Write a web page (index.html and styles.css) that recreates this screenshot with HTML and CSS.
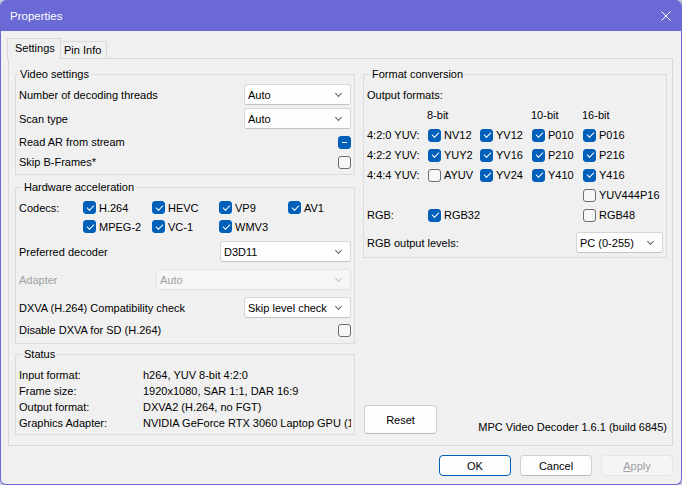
FILE: index.html
```html
<!DOCTYPE html>
<html>
<head>
<meta charset="utf-8">
<title>Properties</title>
<link rel="stylesheet" href="styles.css">
</head>
<body>
<div class="window">
  <div class="titlebar">
    <span class="title">Properties</span>
    <svg class="close" width="10" height="10" viewBox="0 0 10 10"><path d="M0.5 0.5L9.5 9.5M9.5 0.5L0.5 9.5" stroke="#fff" stroke-width="1" fill="none"/></svg>
  </div>
  <div class="content">
    <div class="tabs">
      <div class="tab active">Settings</div>
      <div class="tab">Pin Info</div>
    </div>
    <div class="panel">
      <div class="col left">
        <fieldset class="group gvs">
          <legend>Video settings</legend>
          <div class="row h21"><span>Number of decoding threads</span><div class="combo w107">Auto</div></div>
          <div class="row h21 mt3"><span>Scan type</span><div class="combo w107">Auto</div></div>
          <div class="row h20 mt3"><span>Read AR from stream</span><span class="cb mixed"></span></div>
          <div class="row h20"><span>Skip B-Frames*</span><span class="cb"></span></div>
        </fieldset>
        <fieldset class="group gha">
          <legend>Hardware acceleration</legend>
          <div class="cgrid">
            <span>Codecs:</span>
            <span class="chk"><span class="cb on"></span>H.264</span>
            <span class="chk"><span class="cb on"></span>HEVC</span>
            <span class="chk"><span class="cb on"></span>VP9</span>
            <span class="chk"><span class="cb on"></span>AV1</span>
            <span></span>
            <span class="chk"><span class="cb on"></span>MPEG-2</span>
            <span class="chk"><span class="cb on"></span>VC-1</span>
            <span class="chk"><span class="cb on"></span>WMV3</span>
          </div>
          <div class="row h21 mt5"><span>Preferred decoder</span><div class="combo w131">D3D11</div></div>
          <div class="row h21 mt7 disabled"><span>Adapter</span><div class="combo w195 off">Auto</div></div>
          <div class="row h21 mt7"><span>DXVA (H.264) Compatibility check</span><div class="combo w107">Skip level check</div></div>
          <div class="row h20 mt2"><span>Disable DXVA for SD (H.264)</span><span class="cb"></span></div>
        </fieldset>
        <fieldset class="group gst">
          <legend>Status</legend>
          <div class="sgrid">
            <span>Input format:</span><span>h264, YUV 8-bit 4:2:0</span>
            <span>Frame size:</span><span>1920x1080, SAR 1:1, DAR 16:9</span>
            <span>Output format:</span><span>DXVA2 (H.264, no FGT)</span>
            <span>Graphics Adapter:</span><span>NVIDIA GeForce RTX 3060 Laptop GPU (10DE:2560)</span>
          </div>
        </fieldset>
      </div>
      <div class="col right">
        <fieldset class="group gfc">
          <legend>Format conversion</legend>
          <div class="fgrid">
            <span class="all">Output formats:</span>
            <span></span><span class="hdr">8-bit</span><span></span><span class="hdr">10-bit</span><span class="hdr">16-bit</span>
            <span>4:2:0 YUV:</span>
            <span class="chk"><span class="cb on"></span>NV12</span>
            <span class="chk"><span class="cb on"></span>YV12</span>
            <span class="chk"><span class="cb on"></span>P010</span>
            <span class="chk"><span class="cb on"></span>P016</span>
            <span>4:2:2 YUV:</span>
            <span class="chk"><span class="cb on"></span>YUY2</span>
            <span class="chk"><span class="cb on"></span>YV16</span>
            <span class="chk"><span class="cb on"></span>P210</span>
            <span class="chk"><span class="cb on"></span>P216</span>
            <span>4:4:4 YUV:</span>
            <span class="chk"><span class="cb"></span>AYUV</span>
            <span class="chk"><span class="cb on"></span>YV24</span>
            <span class="chk"><span class="cb on"></span>Y410</span>
            <span class="chk"><span class="cb on"></span>Y416</span>
            <span></span><span></span><span></span><span></span>
            <span class="chk"><span class="cb"></span>YUV444P16</span>
            <span>RGB:</span>
            <span class="chk"><span class="cb on"></span>RGB32</span>
            <span></span><span></span>
            <span class="chk"><span class="cb"></span>RGB48</span>
          </div>
          <div class="row h21 mt7"><span>RGB output levels:</span><div class="combo w87">PC (0-255)</div></div>
        </fieldset>
        <div class="bottomrow">
          <button class="btn reset">Reset</button>
          <span class="version">MPC Video Decoder 1.6.1 (build 6845)</span>
        </div>
      </div>
    </div>
    <div class="footer">
      <button class="btn default">OK</button>
      <button class="btn">Cancel</button>
      <button class="btn off"><span class="u">A</span>pply</button>
    </div>
  </div>
</div>
</body>
</html>
```

FILE: styles.css
```css
* { box-sizing: border-box; }
html, body { margin: 0; padding: 0; }
body {
  background: #c9c9d9;
  font-family: "Liberation Sans", Arial, sans-serif;
  font-size: 11px;
  color: #000;
}
.window {
  width: 682px;
  height: 485px;
  background: #f0f0f0;
  border: 1px solid #6a69d5;
  border-top: 0;
  border-radius: 6px;
  overflow: hidden;
  display: flex;
  flex-direction: column;
}
.titlebar {
  height: 31px;
  flex: none;
  background: #6a69d5;
  color: #fff;
  display: flex;
  align-items: center;
  justify-content: space-between;
  padding: 0 10px 0 9px;
  font-size: 11.5px;
}
.close { display: block; }
.content {
  padding: 7px 8px 0 7px;
}
.tabs {
  display: flex;
  align-items: flex-end;
  height: 21px;
  margin-bottom: -1px;
  position: relative;
  z-index: 1;
}
.tab {
  background: #f0f0f0;
  border: 1px solid #d9d9d9;
  border-bottom: 0;
}
.tab.active {
  margin-left: -1px;
  width: 54px;
  height: 21px;
  line-height: 19px;
  padding-left: 7px;
}
.tab:not(.active) {
  width: 46px;
  height: 17px;
  margin-bottom: 1px;
  line-height: 16px;
  padding-left: 3px;
  border-left: 0;
}
.panel {
  height: 388px;
  border: 1px solid #d9d9d9;
  padding: 8px 5px 10px 6px;
  display: flex;
  gap: 8px;
}
.col { display: flex; flex-direction: column; }
.left { width: 340px; }
.right { width: 304px; justify-content: space-between; }

.group {
  margin: 0;
  border: 1px solid #dcdcdc;
  min-width: 0;
  padding: 3px 3px 2px 3px;
}
.group legend {
  padding: 0 2px;
  margin-left: 3px;
  line-height: 14px;
}
.gvs legend { margin-left: -1px; }
.gha { margin-top: 5px; padding: 4px 3px 3px 3px; }
.gst { margin-top: 3px; padding: 6px 3px 3px 3px; }
.gfc { padding: 4px 3px 4px 3px; }

.row {
  display: flex;
  align-items: center;
  justify-content: space-between;
}
.h21 { height: 21px; }
.h20 { height: 20px; }
.mt2 { margin-top: 2px; }
.mt3 { margin-top: 3px; }
.mt5 { margin-top: 5px; }
.mt7 { margin-top: 7px; }
.disabled { color: #a0a0a0; }

.combo {
  height: 21px;
  background: #fdfdfd;
  border: 1px solid #d6d6d6;
  border-bottom-color: #c2c2c2;
  border-radius: 3px;
  padding-left: 3px;
  display: flex;
  align-items: center;
  position: relative;
  white-space: nowrap;
}
.combo::after {
  content: "";
  position: absolute;
  right: 9px;
  top: 6px;
  width: 4px;
  height: 4px;
  border-right: 1px solid #606060;
  border-bottom: 1px solid #606060;
  transform: rotate(45deg);
}
.combo.off {
  background: #f6f6f6;
  border-color: #e3e3e3;
  color: #a0a0a0;
}
.combo.off::after { border-color: #c4c4c4; }
.w87 { width: 87px; }
.w107 { width: 107px; }
.w131 { width: 131px; }
.w195 { width: 195px; }

.cb {
  display: block;
  width: 13px;
  height: 13px;
  flex: none;
  border: 1px solid #6c6c6c;
  border-radius: 3px;
  background: #f7f7f7;
  position: relative;
}
.cb.on, .cb.mixed {
  background: #005fb8;
  border-color: #005fb8;
}
.cb.on::after {
  content: "";
  position: absolute;
  left: 2.5px;
  top: 2.5px;
  width: 6px;
  height: 3px;
  border-left: 1.2px solid #fff;
  border-bottom: 1.2px solid #fff;
  transform: rotate(-45deg);
}
.cb.mixed::after {
  content: "";
  position: absolute;
  left: 3px;
  top: 5px;
  width: 5px;
  height: 1px;
  background: #fff;
}
.chk {
  display: flex;
  align-items: center;
  gap: 3px;
  white-space: nowrap;
}

.cgrid {
  display: grid;
  grid-template-columns: 64px 69px 67px 69px 1fr;
  grid-auto-rows: 19px;
  align-items: center;
}
.sgrid {
  display: grid;
  grid-template-columns: 124px 1fr;
  grid-auto-rows: 16px;
  align-items: center;
  white-space: nowrap;
}
.sgrid span { overflow: hidden; }
.fgrid {
  display: grid;
  grid-template-columns: 61px 52px 52px 51px 1fr;
  grid-auto-rows: 20px;
  align-items: center;
  white-space: nowrap;
}
.fgrid .all { grid-column: 1 / -1; }
.fgrid .hdr { margin-left: -1px; }

.bottomrow {
  display: flex;
  justify-content: space-between;
  align-items: flex-end;
  padding-bottom: 1px;
}
.version { line-height: 14px; white-space: nowrap; }

.btn {
  font: inherit;
  color: #000;
  height: 21px;
  width: 72px;
  padding: 0;
  background: #fdfdfd;
  border: 1px solid #d0d0d0;
  border-bottom-color: #b9b9b9;
  border-radius: 4px;
  display: flex;
  align-items: center;
  justify-content: center;
}
.btn.reset {
  width: 73px;
  height: 29px;
  margin-left: 1px;
}
.btn.default { border-color: #005fb8; }
.btn.off {
  background: #f5f5f5;
  border-color: #e5e5e5;
  color: #a0a0a0;
}
.u { text-decoration: underline; }
.footer {
  display: flex;
  justify-content: flex-end;
  gap: 9px;
  margin-top: 9px;
}
```
